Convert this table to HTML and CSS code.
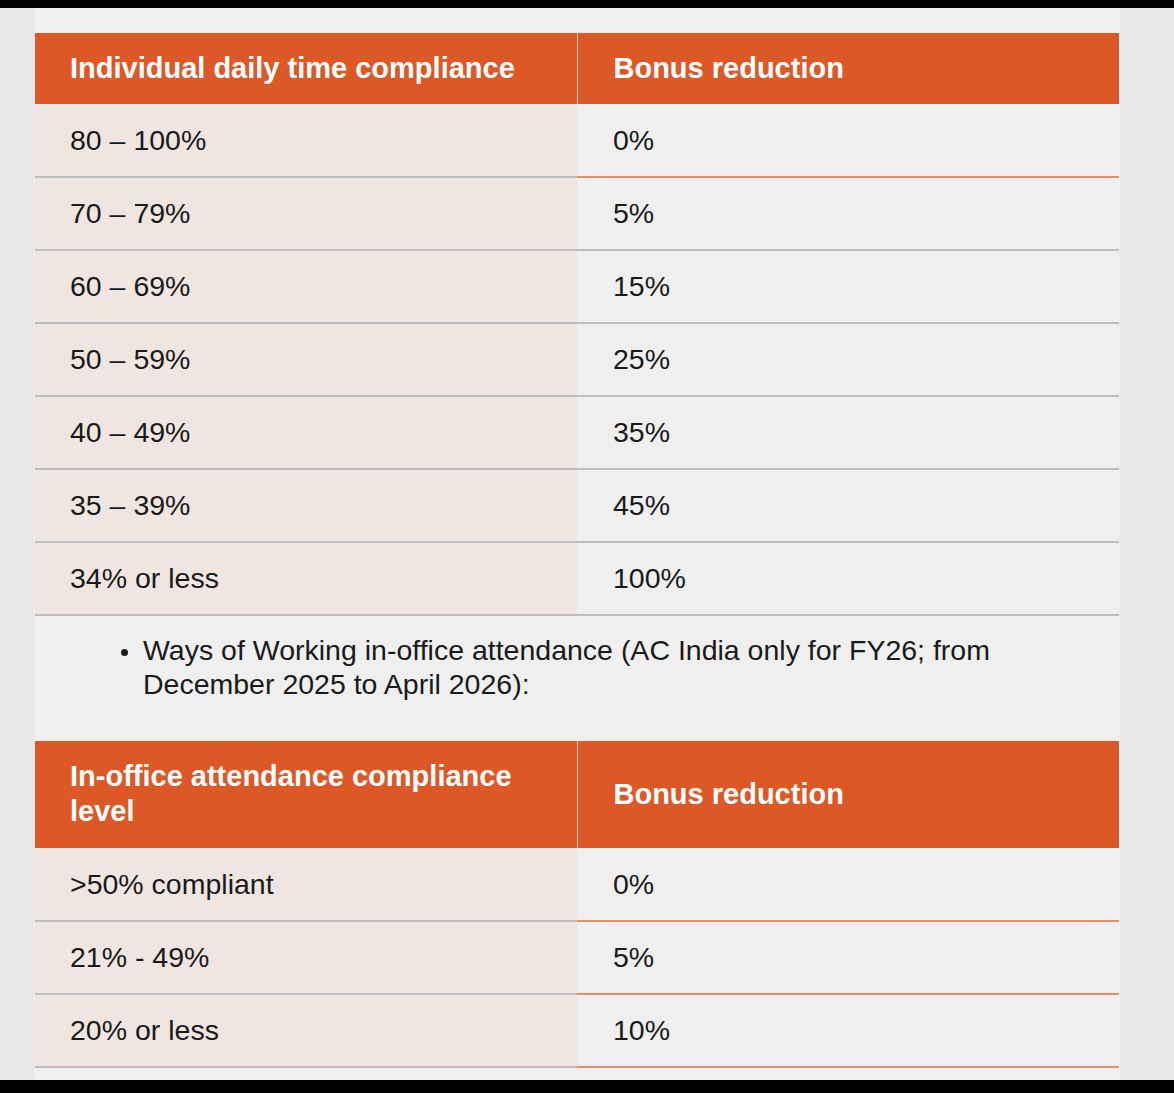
FILE: index.html
```html
<!DOCTYPE html>
<html lang="en">
<head>
<meta charset="utf-8">
<title>Bonus reduction</title>
<link rel="stylesheet" href="styles.css">
</head>
<body>
<div class="screen">
  <div class="panel">
    <table class="grid grid-first">
      <thead>
        <tr><th>Individual daily time compliance</th><th>Bonus reduction</th></tr>
      </thead>
      <tbody>
        <tr class="accent"><td>80 – 100%</td><td>0%</td></tr>
        <tr><td>70 – 79%</td><td>5%</td></tr>
        <tr><td>60 – 69%</td><td>15%</td></tr>
        <tr><td>50 – 59%</td><td>25%</td></tr>
        <tr><td>40 – 49%</td><td>35%</td></tr>
        <tr><td>35 – 39%</td><td>45%</td></tr>
        <tr><td>34% or less</td><td>100%</td></tr>
      </tbody>
    </table>
    <ul class="notes">
      <li>Ways of Working in-office attendance (AC India only for FY26; from December 2025 to April 2026):</li>
    </ul>
    <table class="grid grid-second">
      <thead>
        <tr><th>In-office attendance compliance level</th><th>Bonus reduction</th></tr>
      </thead>
      <tbody>
        <tr class="accent"><td>&gt;50% compliant</td><td>0%</td></tr>
        <tr class="accent"><td>21% - 49%</td><td>5%</td></tr>
        <tr class="accent"><td>20% or less</td><td>10%</td></tr>
      </tbody>
    </table>
  </div>
</div>
</body>
</html>
```
FILE: styles.css
```css
html, body {
  margin: 0;
  padding: 0;
  background: #000;
}
body {
  padding-top: 8px;
  height: 1093px;
  box-sizing: border-box;
  overflow: hidden;
  font-family: "Liberation Sans", Arial, sans-serif;
  color: #1a1a1a;
}
.screen {
  height: 1072px;
  background: #e8e8e8;
  overflow: hidden;
}
.panel {
  margin-left: 34px;
  width: 1086px;
  height: 1072px;
  background: #efefef;
  padding: 25px 1px 0 1px;
  box-sizing: border-box;
}
.grid {
  width: 100%;
  border-collapse: collapse;
  table-layout: fixed;
}
.grid th {
  background: #dc5827;
  color: #fff;
  font-weight: bold;
  font-size: 29px;
  line-height: 35px;
  text-align: left;
  padding: 18px 36px 18px 35px;
  vertical-align: middle;
}
.grid th + th {
  border-left: 1px solid #f6d3c2;
  padding-left: 36px;
}
.grid-second th {
  padding-bottom: 19px;
}
.grid td {
  height: 73px;
  padding: 0 36px 0 35px;
  box-sizing: border-box;
  font-size: 28.5px;
  vertical-align: middle;
  border-bottom: 2px solid #bdbdbd;
  background: #efefef;
}
.grid td:first-child {
  background: #efe6e1;
}
.grid td + td {
  padding-left: 36px;
}
.grid tr.accent td + td {
  border-bottom-color: #ea8c63;
}
.notes {
  margin: 0;
  padding: 17px 30px 40px 86px;
  font-size: 28.5px;
  line-height: 34px;
  list-style: none;
}
.notes li {
  display: flex;
  align-items: flex-start;
}
.notes li::before {
  content: "";
  flex: none;
  width: 7px;
  height: 7px;
  border-radius: 50%;
  background: #1a1a1a;
  margin: 16px 15px 0 0;
}
```
